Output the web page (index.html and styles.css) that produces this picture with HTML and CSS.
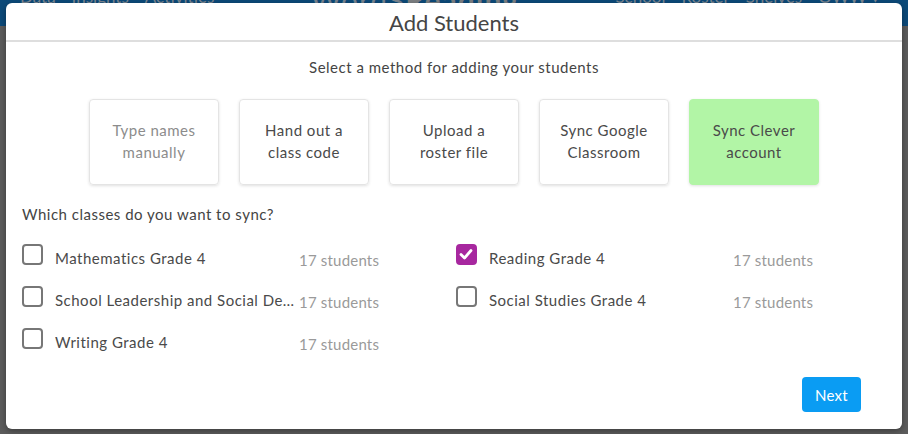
FILE: index.html
```html
<!DOCTYPE html>
<html>
<head>
<meta charset="utf-8">
<link rel="stylesheet" href="styles.css">
</head>
<body>
<div class="page">
  <header class="navbar">
    <nav class="nav-left"><span>Data</span><span>Insights</span><span>Activities</span></nav>
    <div class="logo"><span class="logo-a">WordS</span><span class="logo-b">Reading</span></div>
    <nav class="nav-right"><span>School</span><span>Roster</span><span>Shelves</span><span>OWW ▾</span></nav>
  </header>
  <div class="modal">
    <div class="modal-header">Add Students</div>
    <div class="modal-body">
      <p class="subtitle">Select a method for adding your students</p>
      <div class="methods">
        <div class="method disabled">Type names<br>manually</div>
        <div class="method">Hand out a<br>class code</div>
        <div class="method">Upload a<br>roster file</div>
        <div class="method">Sync Google<br>Classroom</div>
        <div class="method active">Sync Clever<br>account</div>
      </div>
      <p class="question">Which classes do you want to sync?</p>
      <div class="classes">
        <div class="class-row"><span class="cb"></span><span class="cname">Mathematics Grade 4</span><span class="count">17 students</span></div>
        <div class="class-row"><span class="cb checked"><svg viewBox="0 0 20 20" width="20" height="20"><path d="M5 10.5 L8.5 14 L15 6.5" fill="none" stroke="#fff" stroke-width="2.8" stroke-linecap="round" stroke-linejoin="round"/></svg></span><span class="cname">Reading Grade 4</span><span class="count">17 students</span></div>
        <div class="class-row"><span class="cb"></span><span class="cname">School Leadership and Social Development Grade 4</span><span class="count">17 students</span></div>
        <div class="class-row"><span class="cb"></span><span class="cname">Social Studies Grade 4</span><span class="count">17 students</span></div>
        <div class="class-row"><span class="cb"></span><span class="cname">Writing Grade 4</span><span class="count">17 students</span></div>
      </div>
      <div class="footer"><button class="next">Next</button></div>
    </div>
  </div>
</div>
</body>
</html>
```
FILE: styles.css
```css
* { box-sizing: border-box; }
html, body { margin: 0; padding: 0; }
body {
  width: 908px;
  height: 434px;
  overflow: hidden;
  background: #5c5c5c;
  font-family: "Lato", "Helvetica Neue", Arial, sans-serif;
}
.page { position: relative; width: 908px; height: 434px; }
.navbar {
  height: 26px;
  background: #0c4a79;
  display: flex;
  justify-content: space-between;
  align-items: flex-start;
  padding: 0 28px 0 20px;
  overflow: hidden;
  color: #7d8791;
  font-size: 17px;
}
.nav-left, .nav-right { display: flex; gap: 16px; margin-top: -14px; }
.logo { margin-top: -18px; font-size: 30px; letter-spacing: 1px; }
.logo-a { color: #7a8590; }
.logo-b { color: #7d8083; font-weight: 700; }
.modal {
  position: absolute;
  left: 6px;
  top: 3px;
  width: 896px;
  height: 426px;
  background: #fff;
  border-radius: 6px;
  box-shadow: 0 2px 6px rgba(0,0,0,0.35);
  color: #444;
}
.modal-header {
  height: 39px;
  border-bottom: 2px solid #dedede;
  text-align: center;
  font-size: 22px;
  font-weight: 400;
  line-height: 40px;
  color: #454545;
}
.modal-body { padding: 0 16px; letter-spacing: 0.5px; }
.subtitle {
  margin: 15px 0 0;
  text-align: center;
  font-size: 15px;
  line-height: 20px;
}
.methods {
  display: flex;
  justify-content: center;
  gap: 20px;
  margin-top: 22px;
}
.method {
  width: 130px;
  height: 86px;
  border: 1px solid #e4e4e4;
  border-radius: 4px;
  box-shadow: 0 1px 3px rgba(0,0,0,0.12);
  display: flex;
  align-items: center;
  justify-content: center;
  text-align: center;
  font-size: 15px;
  line-height: 22px;
  padding-bottom: 2px;
  color: #4a4a4a;
}
.method.disabled { color: #8c8c8c; }
.method.active { background: #b2f5a6; border-color: #b2f5a6; }
.question {
  margin: 19px 0 0 0;
  font-size: 15px;
  line-height: 20px;
}
.classes {
  display: grid;
  grid-template-columns: 434px 434px;
  margin-top: 13px;
}
.class-row {
  height: 42px;
  display: flex;
  align-items: center;
}
.cb {
  width: 21px;
  height: 21px;
  border: 2px solid #777;
  border-radius: 4px;
  flex: none;
  margin-top: -8px;
  position: relative;
}
.cb.checked { background: #a7279f; border-color: #a7279f; }
.cb svg { position: absolute; left: -2px; top: -2px; }
.cname {
  width: 244px;
  margin-left: 12px;
  font-size: 15px;
  white-space: nowrap;
  overflow: hidden;
  text-overflow: ellipsis;
  color: #4a4a4a;
}
.count {
  font-size: 15px;
  color: #9a9a9a;
  margin-top: 4px;
  letter-spacing: 0.2px;
}
.footer {
  display: flex;
  justify-content: flex-end;
  padding-right: 25px;
  margin-top: 14px;
}
.next {
  width: 59px;
  height: 35px;
  border: none;
  border-radius: 4px;
  background: #0a9cf3;
  color: #fff;
  font-family: inherit;
  font-size: 15px;
  letter-spacing: 0.3px;
}
```
